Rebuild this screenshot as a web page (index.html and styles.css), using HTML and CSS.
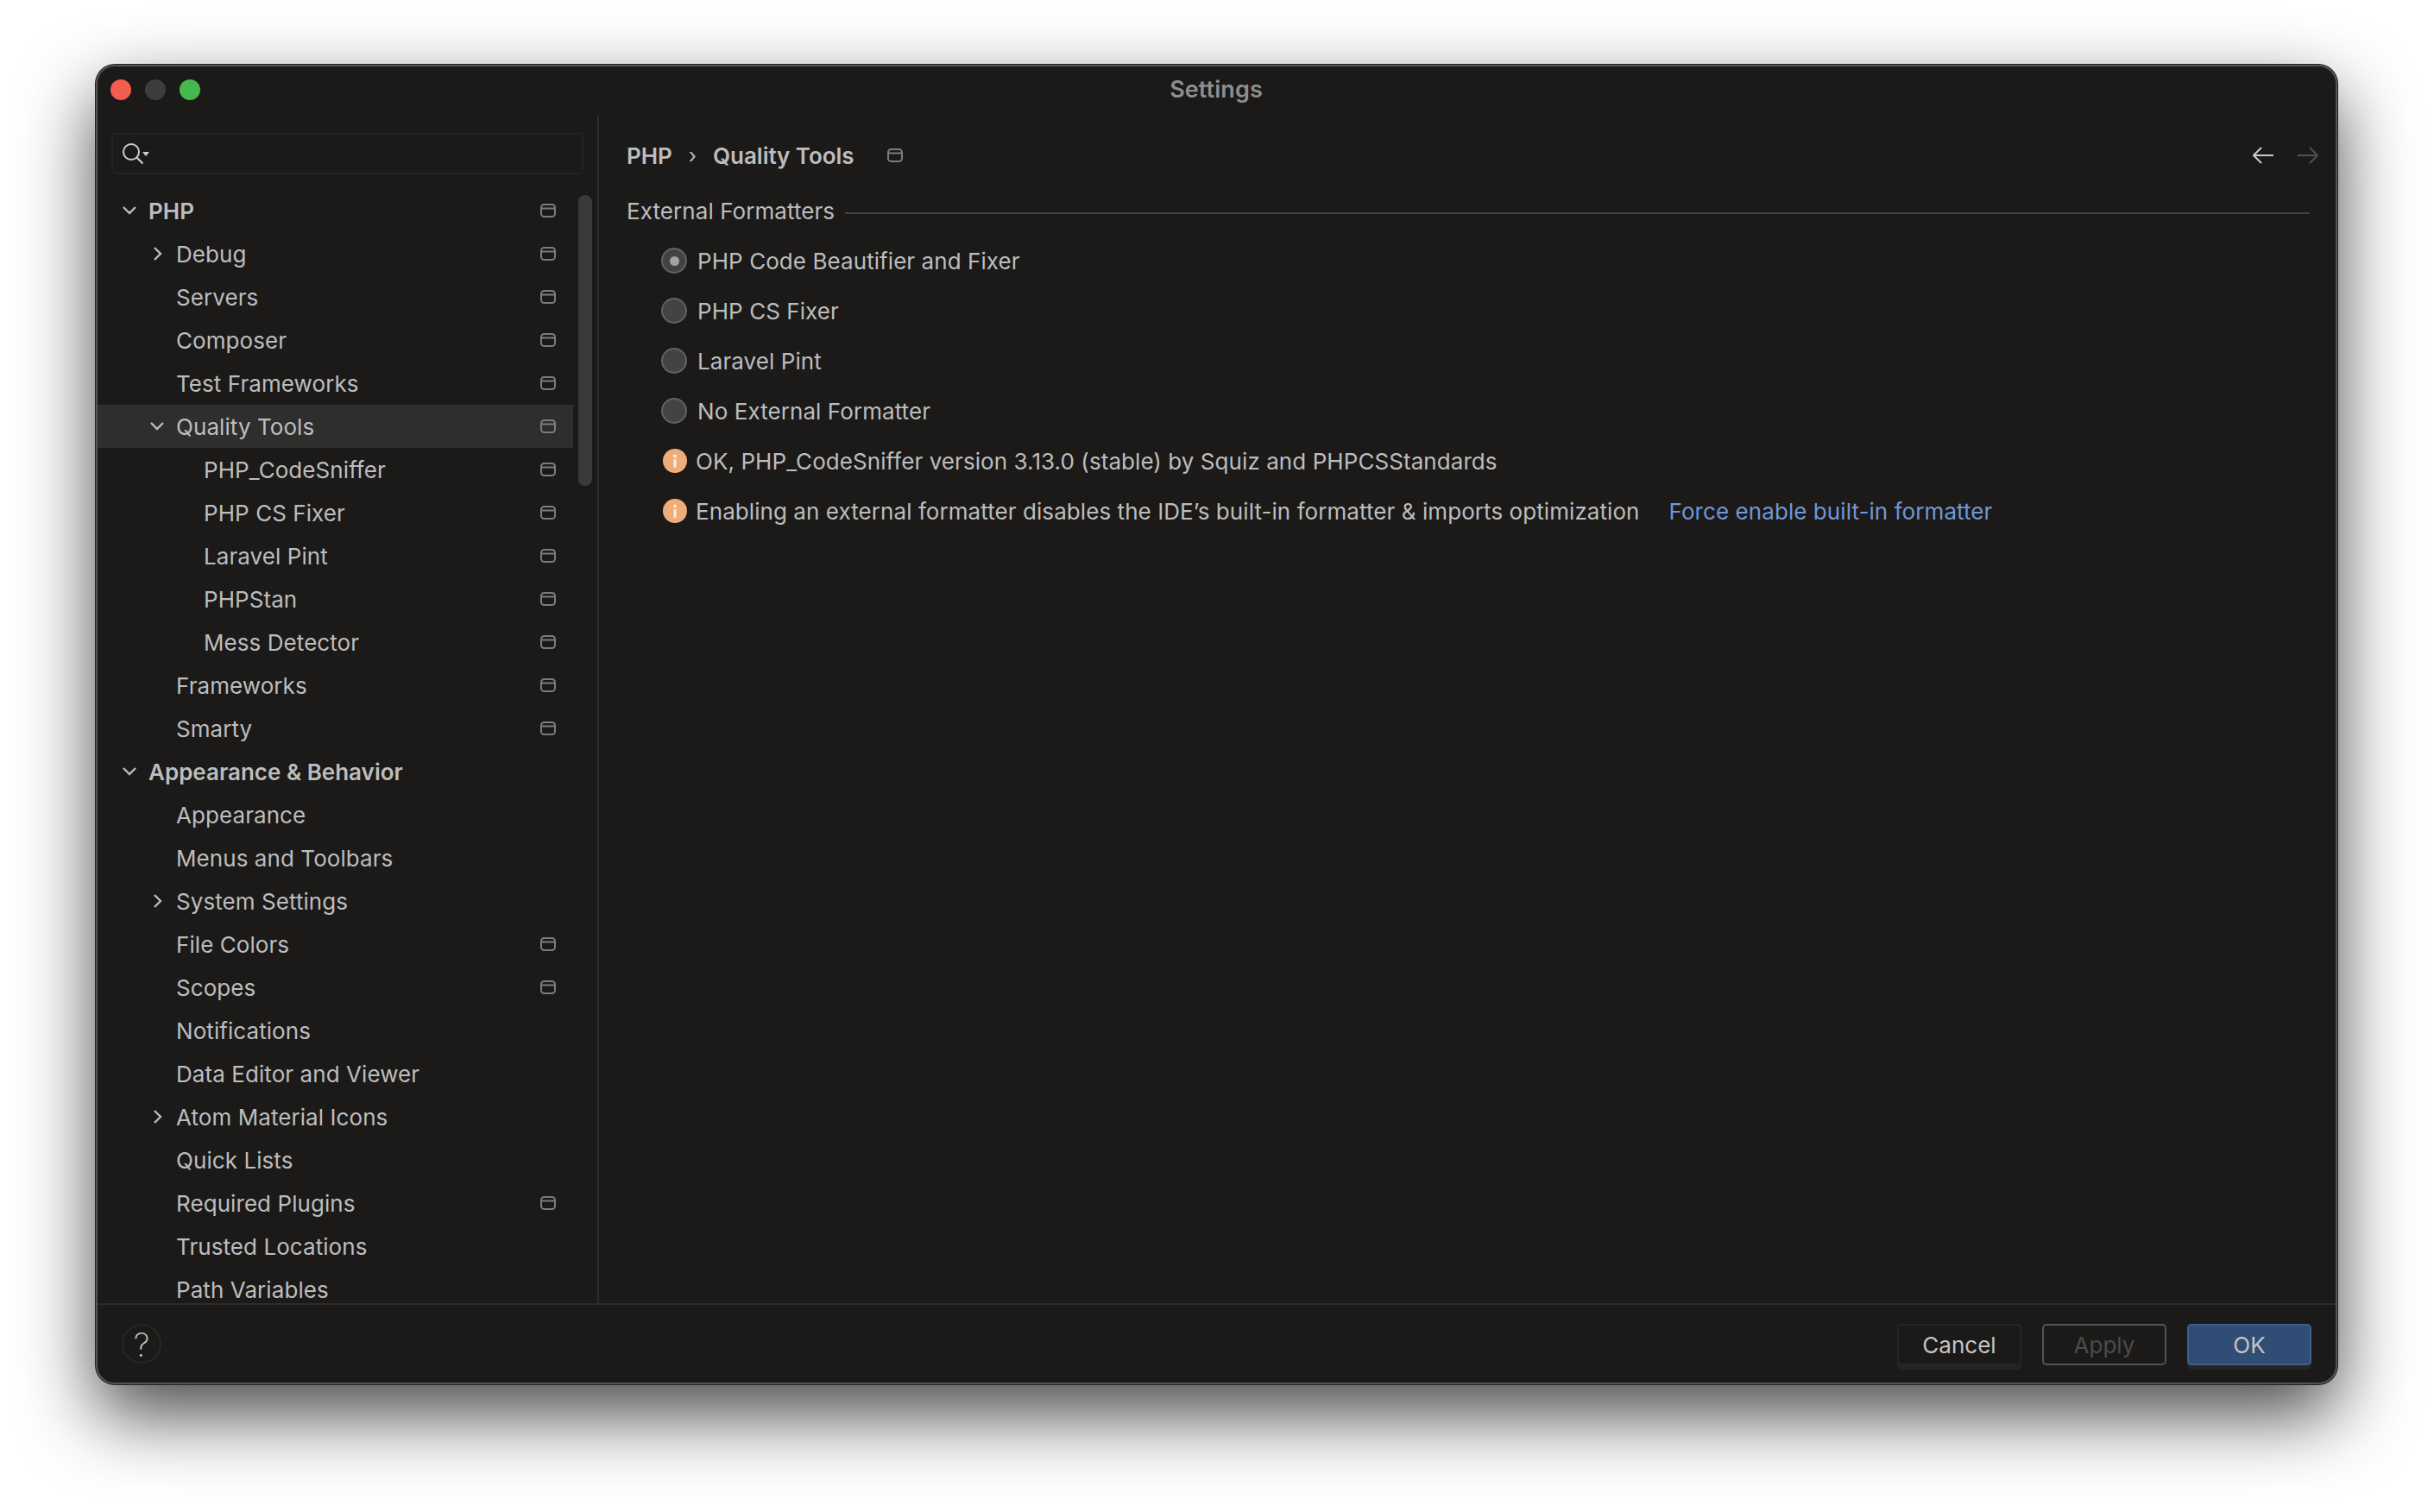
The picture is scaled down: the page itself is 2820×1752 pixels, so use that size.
FILE: index.html
```html
<!DOCTYPE html>
<html lang="en">

<head>
    <meta charset="UTF-8">
    <title>Settings</title>
    <link rel="stylesheet" href="styles.css">
</head>

<body>
    <svg class="defs" width="0" height="0">
        <symbol id="pin" viewBox="0 0 18 16">
            <rect x="1" y="1" width="16" height="14" rx="3.5" fill="none" stroke="currentColor" stroke-width="2"/>
            <path d="M1 5.5h16" stroke="currentColor" stroke-width="2"/>
        </symbol>
        <symbol id="open" viewBox="0 0 18 12">
            <path d="M2 2l7 7 7-7" fill="none" stroke="currentColor" stroke-width="2.4"/>
        </symbol>
        <symbol id="closed" viewBox="0 0 12 18">
            <path d="M2 2l7 7-7 7" fill="none" stroke="currentColor" stroke-width="2.4"/>
        </symbol>
        <symbol id="info" viewBox="0 0 28 28">
            <circle cx="14" cy="14" r="14" fill="#efad79"/>
            <circle cx="14" cy="8.500" r="1.900" fill="#fbeee2"/>
            <rect x="12.500" y="12" width="3" height="10" rx="1.300" fill="#fbeee2"/>
        </symbol>
    </svg>

    <div class="window">
        <div class="titlebar">
            <div class="lights">
                <span class="light light-red"></span>
                <span class="light light-off"></span>
                <span class="light light-green"></span>
            </div>
            <div class="title">Settings</div>
        </div>

        <div class="main">
            <div class="sidebar">
                <div class="search">
                    <svg class="search-icon" width="34" height="28" viewBox="0 0 34 28">
                        <circle cx="11" cy="12" r="9" fill="none" stroke="#cfcfcf" stroke-width="2"/>
                        <path d="M17.500 18.500l7 7" stroke="#cfcfcf" stroke-width="2.200"/>
                        <path d="M24 12h8l-4 5z" fill="#cfcfcf"/>
                    </svg>
                </div>

                <div class="tree-wrap">
                    <div class="tree">
                        <div class="row level-0 bold"><span class="arrow"><svg class="arrow-open"><use href="#open"/></svg></span><span class="label">PHP</span><svg class="pin"><use href="#pin"/></svg></div>
                        <div class="row level-1"><span class="arrow"><svg class="arrow-closed"><use href="#closed"/></svg></span><span class="label">Debug</span><svg class="pin"><use href="#pin"/></svg></div>
                        <div class="row level-1"><span class="arrow"></span><span class="label">Servers</span><svg class="pin"><use href="#pin"/></svg></div>
                        <div class="row level-1"><span class="arrow"></span><span class="label">Composer</span><svg class="pin"><use href="#pin"/></svg></div>
                        <div class="row level-1"><span class="arrow"></span><span class="label">Test Frameworks</span><svg class="pin"><use href="#pin"/></svg></div>
                        <div class="row level-1 selected"><span class="arrow"><svg class="arrow-open"><use href="#open"/></svg></span><span class="label">Quality Tools</span><svg class="pin"><use href="#pin"/></svg></div>
                        <div class="row level-2"><span class="arrow"></span><span class="label">PHP_CodeSniffer</span><svg class="pin"><use href="#pin"/></svg></div>
                        <div class="row level-2"><span class="arrow"></span><span class="label">PHP CS Fixer</span><svg class="pin"><use href="#pin"/></svg></div>
                        <div class="row level-2"><span class="arrow"></span><span class="label">Laravel Pint</span><svg class="pin"><use href="#pin"/></svg></div>
                        <div class="row level-2"><span class="arrow"></span><span class="label">PHPStan</span><svg class="pin"><use href="#pin"/></svg></div>
                        <div class="row level-2"><span class="arrow"></span><span class="label">Mess Detector</span><svg class="pin"><use href="#pin"/></svg></div>
                        <div class="row level-1"><span class="arrow"></span><span class="label">Frameworks</span><svg class="pin"><use href="#pin"/></svg></div>
                        <div class="row level-1"><span class="arrow"></span><span class="label">Smarty</span><svg class="pin"><use href="#pin"/></svg></div>
                        <div class="row level-0 bold"><span class="arrow"><svg class="arrow-open"><use href="#open"/></svg></span><span class="label">Appearance &amp; Behavior</span></div>
                        <div class="row level-1"><span class="arrow"></span><span class="label">Appearance</span></div>
                        <div class="row level-1"><span class="arrow"></span><span class="label">Menus and Toolbars</span></div>
                        <div class="row level-1"><span class="arrow"><svg class="arrow-closed"><use href="#closed"/></svg></span><span class="label">System Settings</span></div>
                        <div class="row level-1"><span class="arrow"></span><span class="label">File Colors</span><svg class="pin"><use href="#pin"/></svg></div>
                        <div class="row level-1"><span class="arrow"></span><span class="label">Scopes</span><svg class="pin"><use href="#pin"/></svg></div>
                        <div class="row level-1"><span class="arrow"></span><span class="label">Notifications</span></div>
                        <div class="row level-1"><span class="arrow"></span><span class="label">Data Editor and Viewer</span></div>
                        <div class="row level-1"><span class="arrow"><svg class="arrow-closed"><use href="#closed"/></svg></span><span class="label">Atom Material Icons</span></div>
                        <div class="row level-1"><span class="arrow"></span><span class="label">Quick Lists</span></div>
                        <div class="row level-1"><span class="arrow"></span><span class="label">Required Plugins</span><svg class="pin"><use href="#pin"/></svg></div>
                        <div class="row level-1"><span class="arrow"></span><span class="label">Trusted Locations</span></div>
                        <div class="row level-1"><span class="arrow"></span><span class="label">Path Variables</span></div>
                    </div>
                    <div class="scrollbar"><div class="thumb"></div></div>
                </div>
            </div>

            <div class="content">
                <div class="crumbs">
                    <span class="crumb">PHP</span>
                    <span class="crumb-sep">›</span>
                    <span class="crumb">Quality Tools</span>
                    <svg class="pin crumb-pin"><use href="#pin"/></svg>
                    <div class="nav">
                        <svg width="24" height="20" viewBox="0 0 24 20"><path d="M10 1l-9 9 9 9M1 10h23" fill="none" stroke="#c9c9c9" stroke-width="2"/></svg>
                        <svg width="24" height="20" viewBox="0 0 24 20"><path d="M14 1l9 9-9 9M23 10H0" fill="none" stroke="#505050" stroke-width="2"/></svg>
                    </div>
                </div>

                <div class="group-title">
                    <span>External Formatters</span>
                    <div class="group-line"></div>
                </div>

                <div class="options">
                    <div class="option"><span class="radio checked"></span><span>PHP Code Beautifier and Fixer</span></div>
                    <div class="option"><span class="radio"></span><span>PHP CS Fixer</span></div>
                    <div class="option"><span class="radio"></span><span>Laravel Pint</span></div>
                    <div class="option"><span class="radio"></span><span>No External Formatter</span></div>
                    <div class="option"><svg class="info"><use href="#info"/></svg><span>OK, PHP_CodeSniffer version 3.13.0 (stable) by Squiz and PHPCSStandards</span></div>
                    <div class="option"><svg class="info"><use href="#info"/></svg><span>Enabling an external formatter disables the IDE’s built-in formatter &amp; imports optimization</span><a class="link">Force enable built-in formatter</a></div>
                </div>
            </div>
        </div>

        <div class="footer">
            <div class="help">?</div>
            <div class="buttons">
                <button class="btn btn-cancel">Cancel</button>
                <button class="btn btn-apply">Apply</button>
                <button class="btn btn-ok">OK</button>
            </div>
        </div>
    </div>
</body>

</html>
```

FILE: styles.css
```css
/* page */
html,
body {
    margin: 0;
    height: 100%;
}

body {
    background-color: #fff;
    padding: 75px 112px 148px 111px;
    box-sizing: border-box;
    font-family: Inter, "Noto Sans", sans-serif;
    font-size: 26px;
    letter-spacing: 0.07px;
    color: #bdbdbd;
    overflow: hidden;
}

.defs {
    position: absolute;
}

/* window */
.window {
    height: 100%;
    box-sizing: border-box;
    display: flex;
    flex-direction: column;
    background-color: #1b1a19;
    border: 2px solid #555;
    border-radius: 22px;
    box-shadow: 0 0 0 1px #222, 0 35px 85px rgba(0, 0, 0, 0.72);
    overflow: hidden;
}

.titlebar {
    flex: none;
    height: 57px;
    display: flex;
    align-items: center;
}

.lights {
    display: flex;
    gap: 16px;
    margin-left: 15px;
    margin-bottom: 3px;
}

.light {
    width: 24px;
    height: 24px;
    border-radius: 50%;
}

.light-red {
    background-color: #f35c50;
}

.light-off {
    background-color: #3e3d3c;
}

.light-green {
    background-color: #47b84d;
}

.title {
    flex: 1;
    text-align: center;
    margin-left: -120px;
    margin-bottom: 5px;
    font-size: 27px;
    font-weight: 600;
    color: #8e8e8e;
}

.main {
    flex: 1;
    min-height: 0;
    display: flex;
}

/* sidebar */
.sidebar {
    flex: none;
    width: 579px;
    display: flex;
    flex-direction: column;
    border-right: 2px solid #2c2c2c;
}

.search {
    flex: none;
    height: 44px;
    margin: 20px 16px 17px 16px;
    border: 2px solid #232322;
    border-radius: 5px;
    display: flex;
    align-items: center;
    padding-left: 10px;
}

.tree-wrap {
    flex: 1;
    min-height: 0;
    display: flex;
    overflow: hidden;
}

.tree {
    flex: none;
    width: 551px;
}

.row {
    height: 50px;
    display: flex;
    align-items: center;
    padding-right: 20px;
    white-space: nowrap;
}

.level-0 {
    padding-left: 13px;
}

.level-1 {
    padding-left: 45px;
}

.level-2 {
    padding-left: 77px;
}

.bold {
    font-weight: 600;
    letter-spacing: 0;
}

.selected {
    background-color: #2e2e2d;
}

.arrow {
    flex: none;
    width: 46px;
    display: flex;
    justify-content: center;
    align-items: center;
    color: #bdbdbd;
}

.arrow-open {
    width: 18px;
    height: 12px;
    margin-left: 2px;
}

.arrow-closed {
    width: 12px;
    height: 18px;
    margin-left: 4px;
}

.label {
    flex: 1;
}

.pin {
    flex: none;
    width: 18px;
    height: 16px;
    color: #7c7c7c;
}

.scrollbar {
    flex: none;
    width: 16px;
    margin-left: 6px;
    padding-top: 7px;
}

.thumb {
    height: 337px;
    background-color: #3a3a39;
    border-radius: 8px;
}

/* right side */
.content {
    flex: 1;
    min-width: 0;
    padding: 21px 20px 0 32px;
}

.crumbs {
    height: 50px;
    display: flex;
    align-items: center;
}

.crumb {
    font-weight: 600;
    letter-spacing: -0.05px;
}

.crumb-sep {
    margin: 0 19px;
    font-size: 24px;
}

.crumb-pin {
    margin-left: 39px;
}

.nav {
    margin-left: auto;
    display: flex;
    gap: 28px;
}

.group-title {
    height: 40px;
    margin: 19px 10px 0 0;
    display: flex;
    align-items: center;
    gap: 12px;
}

.group-line {
    flex: 1;
    height: 2px;
    margin-top: 5px;
    background-color: #424242;
}

.options {
    margin: 9px 0 0 40px;
}

.option {
    height: 58px;
    display: flex;
    align-items: center;
}

.radio {
    flex: none;
    width: 30px;
    height: 30px;
    box-sizing: border-box;
    margin-right: 12px;
    border: 2px solid #626262;
    border-radius: 50%;
    background-color: #444342;
    display: flex;
    align-items: center;
    justify-content: center;
}

.checked::after {
    content: "";
    width: 11px;
    height: 11px;
    border-radius: 50%;
    background-color: #a3a3a3;
}

.info {
    flex: none;
    width: 28px;
    height: 28px;
    margin: 0 10px 0 2px;
}

.link {
    margin-left: 34px;
    color: #7097d8;
}

/* footer */
.footer {
    flex: none;
    height: 92px;
    box-sizing: border-box;
    border-top: 2px solid #2c2c2c;
    display: flex;
    padding: 22px 28px 0 28px;
}

.help {
    width: 46px;
    height: 46px;
    box-sizing: border-box;
    border: 2px solid #262626;
    border-radius: 50%;
    display: flex;
    align-items: center;
    justify-content: center;
    padding-top: 2px;
    font-size: 38px;
    font-weight: 200;
    color: #c4c4c4;
}

.buttons {
    margin-left: auto;
    display: flex;
    gap: 24px;
}

.btn {
    width: 144px;
    height: 48px;
    box-sizing: border-box;
    border: 2px solid #262626;
    border-radius: 5px;
    background-color: #1b1a19;
    font-family: inherit;
    font-size: 26px;
    color: #c4c4c4;
    padding: 0;
}

.btn-cancel {
    box-shadow: 0 5px 0 #242424;
}

.btn-apply {
    border-color: #555;
    color: #4b4b4b;
}

.btn-ok {
    border-color: #3e5f8c;
    background-color: #314d75;
    box-shadow: 0 5px 0 #242424;
}
```
